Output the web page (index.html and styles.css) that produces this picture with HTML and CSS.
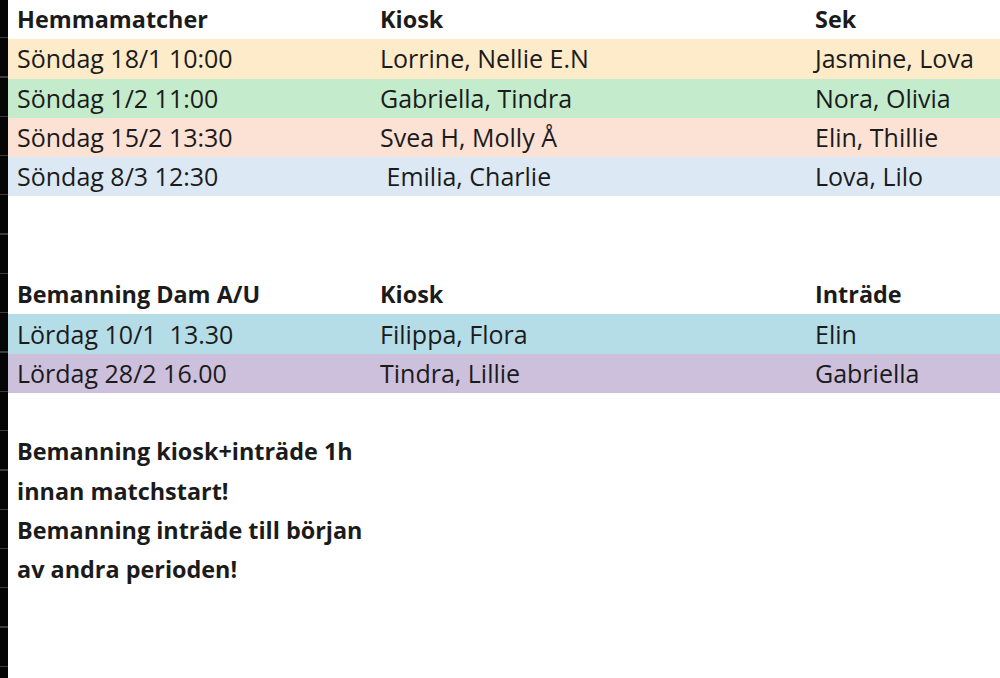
FILE: index.html
```html
<!DOCTYPE html>
<html lang="sv">
<head>
<meta charset="utf-8">
<title>Bemanning</title>
<link rel="stylesheet" href="styles.css">
</head>
<body>
<div class="sheet">
  <div class="rail"></div>
  <div class="content">
    <div class="row head"><span>Hemmamatcher</span><span>Kiosk</span><span>Sek</span></div>
    <div class="row c-yellow"><span>Söndag 18/1 10:00</span><span>Lorrine, Nellie E.N</span><span>Jasmine, Lova</span></div>
    <div class="row c-green"><span>Söndag 1/2 11:00</span><span>Gabriella, Tindra</span><span>Nora, Olivia</span></div>
    <div class="row c-salmon"><span>Söndag 15/2 13:30</span><span>Svea H, Molly Å</span><span>Elin, Thillie</span></div>
    <div class="row c-blue"><span>Söndag 8/3 12:30</span><span> Emilia, Charlie</span><span>Lova, Lilo</span></div>
    <div class="row"></div>
    <div class="row"></div>
    <div class="row head"><span>Bemanning Dam A/U</span><span>Kiosk</span><span>Inträde</span></div>
    <div class="row c-teal"><span>Lördag 10/1  13.30</span><span>Filippa, Flora</span><span>Elin</span></div>
    <div class="row c-purple"><span>Lördag 28/2 16.00</span><span>Tindra, Lillie</span><span>Gabriella</span></div>
    <div class="row"></div>
    <div class="row note"><span>Bemanning kiosk+inträde 1h</span></div>
    <div class="row note"><span>innan matchstart!</span></div>
    <div class="row note"><span>Bemanning inträde till början</span></div>
    <div class="row note"><span>av andra perioden!</span></div>
  </div>
</div>
</body>
</html>
```

FILE: styles.css
```css
html, body {
  margin: 0;
  padding: 0;
  background: #ffffff;
}

body {
  width: 1000px;
  height: 678px;
  overflow: hidden;
  font-family: "Open Sans", "Liberation Sans", sans-serif;
  font-size: 25px;
  color: #1b1b1b;
}

.sheet {
  display: flex;
  height: 678px;
}

.rail {
  width: 8px;
  flex: 0 0 8px;
  background-color: #050505;
  background-image: repeating-linear-gradient(
    to bottom,
    transparent 0,
    transparent 37px,
    #3c3c3c 37px,
    #3c3c3c 38.3px,
    transparent 38.3px,
    transparent 39.3px
  );
}

.content {
  flex: 1;
  display: flex;
  flex-direction: column;
}

.row {
  box-sizing: border-box;
  height: 39.3px;
  flex: 0 0 39.3px;
  display: grid;
  grid-template-columns: 363px 435px 1fr;
  align-items: center;
  padding: 0 0 0 9px;
  white-space: pre;
}

.row span {
  line-height: 1;
}

.head,
.note {
  font-weight: 700;
  font-size: 23.4px;
}

.note {
  grid-template-columns: 1fr;
}

.c-yellow { background: #fdebc9; }
.c-green  { background: #c4ebcc; }
.c-salmon { background: #fce1d5; }
.c-blue   { background: #dce9f4; }
.c-teal   { background: #b5dde8; }
.c-purple { background: #ccc0dc; }
```
